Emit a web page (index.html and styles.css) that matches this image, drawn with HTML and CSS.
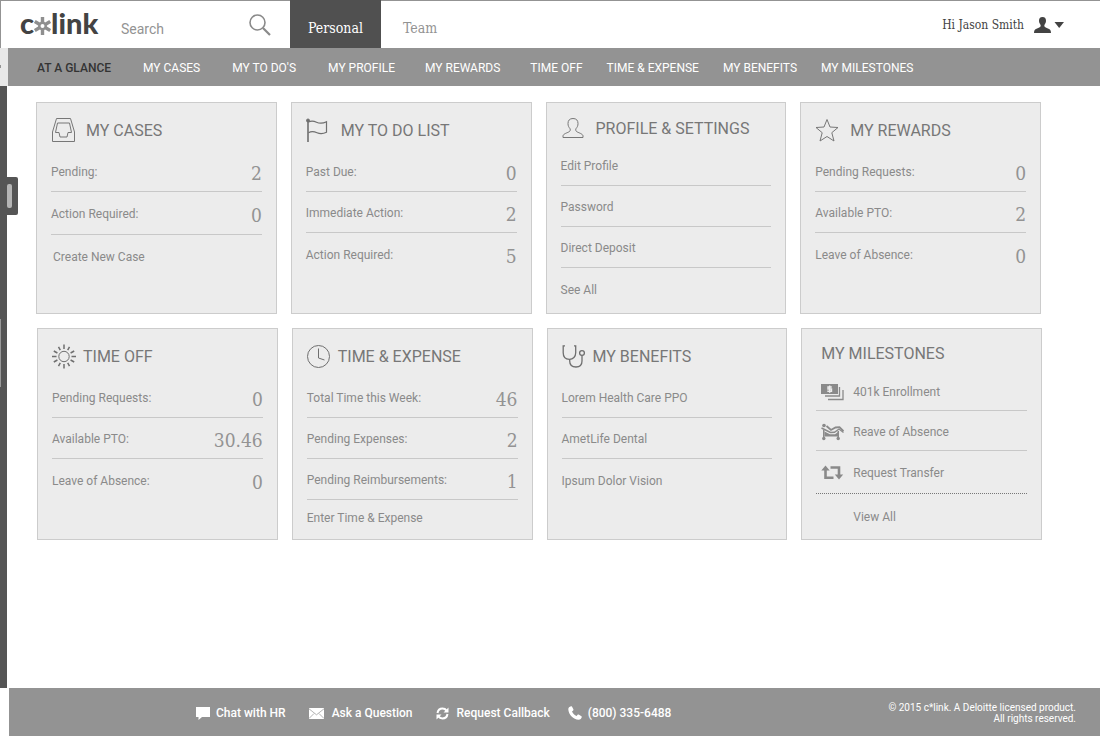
FILE: index.html
```html
<!DOCTYPE html>
<html lang="en">
<head>
    <meta charset="UTF-8">
    <meta name="viewport" content="width=device-width, initial-scale=1.0">
    <title>c*link</title>
    <link rel="stylesheet" href="styles.css">
</head>
<body>
    <header class="topbar">
        <a class="logo" href="#" aria-label="c*link">
            <span>c</span>
            <svg width="17" height="18" viewBox="0 0 17 18" fill="none" stroke="#8f8f8f">
                <path stroke-width="3.400" d="M8.500 0v6M8.500 12v6M.8 4.500l5 3M11.200 10.500l5 3M16.200 4.500l-5 3M5.800 10.500l-5 3"/>
                <circle cx="8.500" cy="9" r="3.200" stroke-width="2.400"/>
            </svg>
            <span>link</span>
        </a>
        <form class="search">
            <input type="text" placeholder="Search" aria-label="Search">
            <button type="button" aria-label="Submit search">
                <svg width="22" height="22" viewBox="0 0 22 22" fill="none" stroke="#8a8a8a">
                    <circle cx="8.500" cy="8.500" r="7.500" stroke-width="1.600"/>
                    <path d="M14 14l7 7" stroke-width="2.200"/>
                </svg>
            </button>
        </form>
        <div class="tabs">
            <a class="tab active" href="#">Personal</a>
            <a class="tab" href="#">Team</a>
        </div>
        <button class="user" type="button">
            <span>Hi Jason Smith</span>
            <svg width="30" height="16" viewBox="0 0 30 16" fill="#434343">
                <path d="M8.500 0C6 0 5 1.600 5 3.800c0 1.200.5 2.600 1.300 3.600.5.700.5 1.800 0 2.400-.6.800-2.300 1.300-3.800 2C1 12.500 0 13.300 0 16h17c0-2.700-1-3.500-2.500-4.200-1.500-.7-3.200-1.200-3.800-2-.5-.6-.5-1.700 0-2.400.8-1 1.300-2.400 1.300-3.600C12 1.600 11 0 8.500 0z"/>
                <path d="M20.500 5h9.500l-4.800 6z"/>
            </svg>
        </button>
    </header>

    <nav class="menu">
        <ul>
            <li><a class="current" href="#">AT A GLANCE</a></li>
            <li><a href="#">MY CASES</a></li>
            <li><a href="#">MY TO DO'S</a></li>
            <li><a href="#">MY PROFILE</a></li>
            <li><a href="#">MY REWARDS</a></li>
            <li><a href="#">TIME OFF</a></li>
            <li><a href="#">TIME &amp; EXPENSE</a></li>
            <li><a href="#">MY BENEFITS</a></li>
            <li><a href="#">MY MILESTONES</a></li>
        </ul>
    </nav>

    <div class="page">
        <aside class="drawer">
            <button class="handle" type="button" aria-label="Open drawer"></button>
            <div class="thumb"></div>
        </aside>

        <main>
            <div class="cards">
                <section class="card">
                    <h2>
                        <svg width="25" height="25" viewBox="0 0 25 25" fill="none" stroke="#777">
                            <path d="M1.500 14L5.500.5h14L23.500 14v9.500h-22z"/>
                            <path d="M6.500 5h12l2 9.500h-3.500l-1 4.500H9l-1-4.500H4.500z"/>
                        </svg>
                        MY CASES
                    </h2>
                    <ul>
                        <li><span>Pending:</span><b>2</b></li>
                        <li class="tall"><span>Action Required:</span><b>0</b></li>
                        <li><a class="create" href="#">Create New Case</a></li>
                    </ul>
                </section>

                <section class="card">
                    <h2>
                        <svg width="25" height="25" viewBox="0 0 25 25" fill="none" stroke="#6f6f6f">
                            <circle cx="2" cy="2.500" r="1.500" fill="#6f6f6f"/>
                            <path d="M2 3v21" stroke-width="1.600"/>
                            <path stroke-width="1.200" d="M2.500 4c3-1.500 5-1.200 8 .2s6 1.500 10-.5v10.500c-4 2-6.500 1.800-9.500.5s-5.500-1.700-8.500 0"/>
                        </svg>
                        MY TO DO LIST
                    </h2>
                    <ul>
                        <li><span>Past Due:</span><b>0</b></li>
                        <li><span>Immediate Action:</span><b>2</b></li>
                        <li><span>Action Required:</span><b>5</b></li>
                    </ul>
                </section>

                <section class="card short">
                    <h2>
                        <svg width="25" height="25" viewBox="0 0 25 25" fill="none" stroke="#777">
                            <path d="M12 2.500c-3.500 0-5 2-5 5 0 2.500.9 3.800 1.800 4.800.7.800.6 2.500-.3 3.200-1.500 1.200-6.500 2.200-6.500 4.500v1.500h20V20c0-2.300-5-3.300-6.500-4.500-.9-.7-1-2.400-.3-3.200.9-1 1.800-2.300 1.800-4.800 0-3-1.500-5-5-5z"/>
                        </svg>
                        PROFILE &amp; SETTINGS
                    </h2>
                    <ul>
                        <li><a href="#">Edit Profile</a></li>
                        <li><a href="#">Password</a></li>
                        <li><a href="#">Direct Deposit</a></li>
                        <li><a href="#">See All</a></li>
                    </ul>
                </section>

                <section class="card">
                    <h2>
                        <svg width="25" height="25" viewBox="0 0 25 25" fill="none" stroke="#777">
                            <path d="M12 1.500l3 7.500 8 .5-6.200 5.200 2.200 8.300-7-4.500-7 4.500 2.200-8.300L1 9.500l8-.5z"/>
                        </svg>
                        MY REWARDS
                    </h2>
                    <ul>
                        <li><span>Pending Requests:</span><b>0</b></li>
                        <li><span>Available PTO:</span><b>2</b></li>
                        <li><span>Leave of Absence:</span><b>0</b></li>
                    </ul>
                </section>
            </div>

            <div class="cards lower">
                <section class="card">
                    <h2>
                        <svg width="25" height="25" viewBox="0 0 25 25" fill="none" stroke="#6f6f6f">
                            <circle cx="12" cy="12.500" r="5.200"/>
                            <path stroke-width="1.500" d="M12 .5v4.500M12 20v4.500M0 12.500h4.500M19.500 12.500h4.500M6.500 2.800l1.800 3.300M15.700 18.900l1.800 3.300M17.500 2.800l-1.800 3.300M8.300 18.900l-1.800 3.300M1.800 7l3.600 2M18.600 16l3.600 2M22.200 7l-3.600 2M5.400 16l-3.600 2"/>
                        </svg>
                        TIME OFF
                    </h2>
                    <ul>
                        <li><span>Pending Requests:</span><b>0</b></li>
                        <li><span>Available PTO:</span><b>30.46</b></li>
                        <li><span>Leave of Absence:</span><b>0</b></li>
                    </ul>
                </section>

                <section class="card">
                    <h2>
                        <svg width="25" height="25" viewBox="0 0 25 25" fill="none" stroke="#6f6f6f">
                            <circle cx="11.500" cy="12.500" r="11"/>
                            <path d="M11.500 4.500v9.500l6 2"/>
                        </svg>
                        TIME &amp; EXPENSE
                    </h2>
                    <ul>
                        <li><span>Total Time this Week:</span><b>46</b></li>
                        <li><span>Pending Expenses:</span><b>2</b></li>
                        <li><span>Pending Reimbursements:</span><b>1</b></li>
                        <li class="last"><a href="#">Enter Time &amp; Expense</a></li>
                    </ul>
                </section>

                <section class="card">
                    <h2>
                        <svg width="25" height="25" viewBox="0 0 25 25" fill="none" stroke="#6f6f6f" stroke-width="1.300">
                            <path d="M3 1.800H1.200v7c0 4 2.500 6.500 6.200 6.500s6.300-2.500 6.300-6.500v-7H12"/>
                            <path d="M7.700 15.300v1.700c0 4 2.300 6 6.300 6s6-2 6-6v-5.500"/>
                            <circle cx="20" cy="9" r="2.400"/>
                        </svg>
                        MY BENEFITS
                    </h2>
                    <ul>
                        <li><a href="#">Lorem Health Care PPO</a></li>
                        <li><a href="#">AmetLife Dental</a></li>
                        <li><a href="#">Ipsum Dolor Vision</a></li>
                    </ul>
                </section>

                <section class="card short milestones">
                    <h2>MY MILESTONES</h2>
                    <ul>
                        <li>
                            <svg width="24" height="18" viewBox="0 0 24 18" fill="#8a8a8a">
                                <path d="M0 1h17v10H0z"/>
                                <path d="M18.500 4v9H4M22 7v9.500H7" fill="none" stroke="#8a8a8a" stroke-width="1.300"/>
                                <path d="M10.800 4H7v2h3.500v2.200H6.300M8.700 2.500v7.200" fill="none" stroke="#ececec" stroke-width="1.400"/>
                            </svg>
                            <a href="#">401k Enrollment</a>
                        </li>
                        <li>
                            <svg width="24" height="18" viewBox="0 0 24 18" fill="#8a8a8a">
                                <circle cx="3" cy="2.500" r="1.800"/>
                                <path d="M.5 5l9 4.500 4-.3L18 6l4.500 3.500" fill="none" stroke="#8a8a8a" stroke-width="1.400"/>
                                <path d="M5.500 3l4.500 4 4.500-2.500 4-.3 4 4" fill="none" stroke="#8a8a8a" stroke-width="1.800"/>
                                <path d="M3.500 8.500l5.500 2.700h5l3.500-2.400v4.700h-14z"/>
                                <path d="M2 7h1.500v8H2zM16.500 8H18v7h-1.500z"/>
                                <circle cx="2.800" cy="15.500" r="1.700"/>
                                <circle cx="17.200" cy="15.500" r="1.700"/>
                            </svg>
                            <a href="#">Reave of Absence</a>
                        </li>
                        <li class="tall dotted">
                            <svg width="24" height="18" viewBox="0 0 24 18">
                                <path d="M4.500 4v9.800h8M9.500 3.500h8.500V12" fill="none" stroke="#8a8a8a" stroke-width="2.600"/>
                                <path d="M.3 6.500L4.500 1.500l4.200 5zM13.800 10.500h8.400L18 15.500z" fill="#8a8a8a"/>
                            </svg>
                            <a href="#">Request Transfer</a>
                        </li>
                        <li class="tall"><a class="view-all" href="#">View All</a></li>
                    </ul>
                </section>
            </div>
        </main>
    </div>

    <footer class="footer">
        <div class="contact">
            <a href="#">
                <svg width="14" height="13" viewBox="0 0 14 13" fill="#fff"><path d="M0 0h14v10H6l-3.500 3v-3H0z"/></svg>
                Chat with HR
            </a>
            <a class="wide" href="#">
                <svg width="15" height="11" viewBox="0 0 15 11" fill="#fff">
                    <path d="M0 0h15v11H0z"/>
                    <path d="M0 .8l7.500 6 7.500-6M0 10.500l5-5M15 10.500l-5-5" fill="none" stroke="#939393" stroke-width=".7"/>
                </svg>
                Ask a Question
            </a>
            <a class="wide" href="#">
                <svg width="13" height="13" viewBox="0 0 13 13" fill="none" stroke="#fff" stroke-width="2">
                    <path d="M1.500 6C2 3 4 1.600 6.500 1.600c1.800 0 3.200.8 4 2M11.500 7c-.5 3-2.500 4.400-5 4.400-1.800 0-3.200-.8-4-2"/>
                    <path d="M12.500.5v5h-5zM.5 12.500v-5h5z" fill="#fff" stroke="none"/>
                </svg>
                Request Callback
            </a>
            <a href="#">
                <svg width="14" height="14" viewBox="0 0 14 14" fill="#fff"><path d="M3 .2C1.500.5.200 1.800.3 3.500.6 8.500 5.500 13.500 10.500 13.800c1.700.1 3-1.200 3.300-2.700 0-.4-.1-.7-.4-.9l-2.700-1.600c-.4-.2-.8-.1-1.100.2l-1 1.200C6.500 9 5 7.500 4 5.400l1.200-1c.3-.3.4-.7.2-1.100L3.900.6C3.700.3 3.400.1 3 .2z"/></svg>
                (800) 335-6488
            </a>
        </div>
        <p class="copyright">© 2015 c*link. A Deloitte licensed product.<br>All rights reserved.</p>
    </footer>
</body>
</html>
```
FILE: styles.css
```css
* {
    box-sizing: border-box;
}

body {
    margin: 0;
    min-height: 100vh;
    display: flex;
    flex-direction: column;
    background-color: #fff;
    color: #8a8a8a;
    font-family: Roboto, sans-serif;
    font-size: 12px;
}

a {
    color: inherit;
    text-decoration: none;
}

ul {
    list-style: none;
    margin: 0;
    padding: 0;
}

button {
    padding: 0;
    border: none;
    background: none;
    cursor: pointer;
}

svg {
    display: block;
    flex: none;
}

/* Top bar */
.topbar {
    display: flex;
    height: 48px;
    border-top: 1px solid #939393;
    border-left: 1px solid #939393;
}

.logo {
    display: flex;
    align-items: center;
    width: 120px;
    padding: 0 0 4px 19px;
    color: #434343;
    font-family: Lato, sans-serif;
    font-size: 29px;
    font-weight: 900;
}

.logo svg {
    margin-top: 6px;
}

.search {
    display: flex;
    width: 169px;
    padding-right: 19px;
    align-items: center;
}

.search input {
    flex: 1;
    min-width: 0;
    padding: 8px 0 0;
    border: none;
    outline: none;
    background: none;
    color: #8a8a8a;
    font-family: inherit;
    font-size: 14px;
}

.search input::placeholder {
    color: #939393;
}

.tabs {
    display: flex;
    font-family: "Roboto Slab", "DejaVu Serif Condensed", "DejaVu Serif", serif;
    font-size: 14px;
}

.tab {
    display: flex;
    align-items: center;
    margin-top: -1px;
    padding: 8px 18px 0;
    color: #939393;
}

.tab + .tab {
    padding-left: 22px;
}

.tab.active {
    background-color: #505050;
    color: #fff;
}

.user {
    display: flex;
    align-items: center;
    gap: 10px;
    margin-left: auto;
    padding-right: 36px;
    color: #434343;
    font-family: "Roboto Slab", "DejaVu Serif Condensed", "DejaVu Serif", serif;
    font-size: 12px;
}

/* Main menu */
.menu {
    position: relative;
    height: 38px;
    border-left: 8px solid #e8e8e8;
    background-color: #939393;
    color: #fff;
}

.menu::before {
    content: "";
    position: absolute;
    top: 17px;
    left: -8px;
    width: 1px;
    height: 3px;
    background-color: #939393;
}

.menu ul {
    display: flex;
    align-items: center;
    height: 100%;
    padding: 2px 0 0 29px;
}

.menu li {
    white-space: nowrap;
}

.menu li + li {
    margin-left: 32px;
}

.menu li:nth-child(n+5) {
    margin-left: 30px;
}

.menu li:nth-child(n+7) {
    margin-left: 24px;
}

.menu .current {
    color: #333;
    font-weight: 500;
}

/* Page */
.page {
    flex: 1;
    display: flex;
}

.drawer {
    position: relative;
    width: 7px;
    background-color: #555;
}

.handle {
    position: absolute;
    top: 91px;
    left: 7px;
    width: 11px;
    height: 38px;
    background-color: #555;
    border-radius: 0 2px 2px 0;
}

.handle::before {
    content: "";
    position: absolute;
    top: 7px;
    left: 0;
    width: 5px;
    height: 24px;
    background-color: #b5b5b5;
    border-radius: 2px;
}

.thumb {
    position: absolute;
    top: 233px;
    left: 0;
    width: 1px;
    height: 68px;
    background-color: #999;
}

main {
    flex: 1;
    padding: 16px 59px 0 29px;
}

.cards {
    display: grid;
    grid-template-columns: repeat(4, 1fr);
    gap: 14px;
}

.cards.lower {
    margin: 14px -1px 0 1px;
}

.card {
    min-height: 212px;
    padding: 0 14px;
    background-color: #ececec;
    border: 1px solid #ccc;
}

.card h2 {
    display: flex;
    align-items: center;
    gap: 10px;
    height: 48px;
    margin: 0;
    padding-top: 6px;
    color: #777;
    font-size: 16px;
    font-weight: 400;
    white-space: nowrap;
}

.card.short h2 {
    height: 42px;
    padding-top: 8px;
}

.lower .card h2 {
    gap: 6px;
}

.card li {
    display: flex;
    align-items: center;
    justify-content: space-between;
    height: 41px;
    padding-top: 2px;
    border-bottom: 1px solid #c8c8c8;
}

.card li.tall {
    height: 43px;
}

.card li:last-child {
    border-bottom: none;
}

.card li.last {
    height: 34px;
}

.card b {
    padding-top: 2px;
    color: #939393;
    font-family: "Roboto Slab", "DejaVu Serif Condensed", "DejaVu Serif", serif;
    font-size: 19px;
    font-weight: 400;
}

.create {
    padding-left: 2px;
}

.card.milestones h2 {
    padding: 6px 0 0 5px;
}

.milestones li {
    justify-content: flex-start;
    gap: 8px;
    height: 40px;
    padding-left: 5px;
}

.milestones li.dotted {
    border-bottom: 1px dotted #777;
}

.view-all {
    padding-left: 32px;
}

/* Footer */
.footer {
    display: flex;
    justify-content: space-between;
    align-items: center;
    height: 48px;
    margin-left: 9px;
    padding: 2px 24px 0 187px;
    background-color: #939393;
    color: #fff;
}

.contact {
    display: flex;
    gap: 18px;
    font-weight: 500;
    white-space: nowrap;
}

.contact a {
    display: flex;
    align-items: center;
    gap: 6px;
}

.contact .wide {
    gap: 8px;
    margin-left: 5px;
}

.copyright {
    margin: 0;
    font-size: 10px;
    line-height: 11px;
    text-align: right;
}
```
